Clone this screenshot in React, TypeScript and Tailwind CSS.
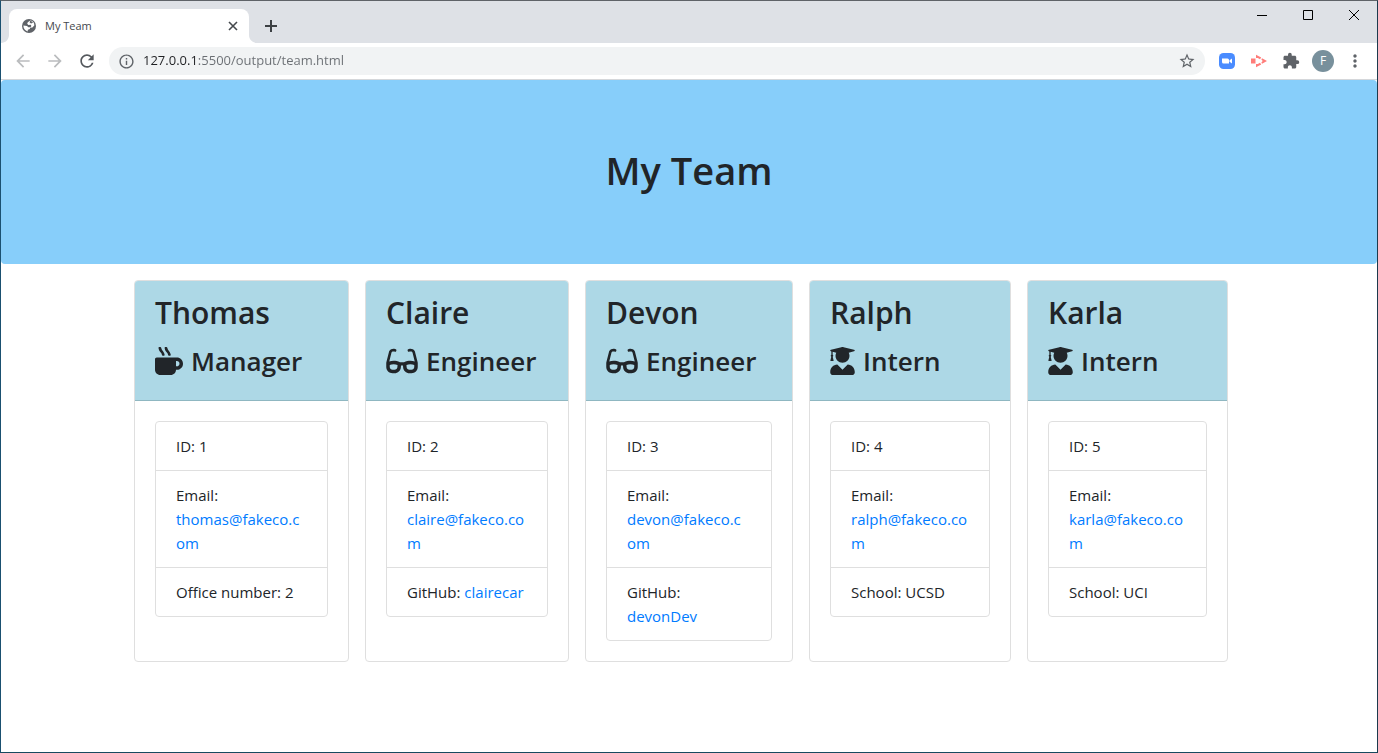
import type { ReactNode } from 'react';
import { FaGlasses, FaMugHot, FaUserGraduate } from 'react-icons/fa';
import {
  MdArrowBack,
  MdArrowForward,
  MdExtension,
  MdInfoOutline,
  MdMoreVert,
  MdRefresh,
  MdStarBorder,
} from 'react-icons/md';

type Role = 'Manager' | 'Engineer' | 'Intern';

interface Member {
  name: string;
  role: Role;
  id: number;
  // The address in two parts; a narrow card may wrap between them.
  email: [string, string];
  detail: { label: string; value: string; href?: string };
}

const team: Member[] = [
  { name: 'Thomas', role: 'Manager', id: 1, email: ['thomas@fakeco.c', 'om'], detail: { label: 'Office number', value: '2' } },
  { name: 'Claire', role: 'Engineer', id: 2, email: ['claire@fakeco.co', 'm'], detail: { label: 'GitHub', value: 'clairecar', href: 'https://github.com/clairecar' } },
  { name: 'Devon', role: 'Engineer', id: 3, email: ['devon@fakeco.c', 'om'], detail: { label: 'GitHub', value: 'devonDev', href: 'https://github.com/devonDev' } },
  { name: 'Ralph', role: 'Intern', id: 4, email: ['ralph@fakeco.co', 'm'], detail: { label: 'School', value: 'UCSD' } },
  { name: 'Karla', role: 'Intern', id: 5, email: ['karla@fakeco.co', 'm'], detail: { label: 'School', value: 'UCI' } },
];

const roleIcons: Record<Role, ReactNode> = {
  Manager: <FaMugHot className="h-7 w-7 shrink-0" />,
  Engineer: <FaGlasses className="h-7 w-8 shrink-0" />,
  Intern: <FaUserGraduate className="h-7 w-[25px] shrink-0" />,
};

function Globe() {
  return (
    <svg viewBox="0 0 16 16" className="size-4 shrink-0" aria-hidden="true">
      <circle cx="8" cy="8" r="7" fill="#5f6368" />
      <path
        d="M9.300 2.600 6.800 4.200l-.6 1.600 1.200 1.100 2.300-.1.700 1.200-1 1.200-2.100.1-1.300-1.300-3.600-.4c-.1 3 1.600 5.200 4.300 5.800l.1-1.700 2-.6.3-1.400 2.300-.3 1.900-1.800c.2-2.300-1-4-2.800-4.800z"
        fill="#fff"
      />
      <path d="M9.300 2.600l-.7 1.900 1.500.9 2-.9z" fill="#5f6368" />
    </svg>
  );
}

function TabFlare({ className }: { className: string }) {
  return (
    <svg viewBox="0 0 8 8" className={className} aria-hidden="true">
      <path d="M8 0v8H0c4.400 0 8-3.600 8-8z" fill="#fff" />
    </svg>
  );
}

function TabStrip() {
  return (
    <div className="flex h-[42px] items-end bg-[#dee1e6] pl-2">
      <div className="relative flex h-[34px] w-60 items-center gap-2 rounded-t-lg bg-white pr-2 pl-3">
        <TabFlare className="absolute bottom-0 -left-2 size-2" />
        <TabFlare className="absolute -right-2 bottom-0 size-2 -scale-x-100" />
        <Globe />
        <span className="flex-1 text-[11px] text-[#45494d]">My Team</span>
        <button type="button" aria-label="Close tab" className="flex size-4 items-center justify-center">
          <svg viewBox="0 0 16 16" className="size-4" aria-hidden="true">
            <path d="M4 4l8 8M12 4l-8 8" stroke="#45494d" strokeWidth="1.600" />
          </svg>
        </button>
      </div>
      <button type="button" aria-label="New tab" className="ml-2 flex h-[34px] w-7 items-center justify-center">
        <svg viewBox="0 0 16 16" className="size-4" aria-hidden="true">
          <path d="M8 2v12M2 8h12" stroke="#3c4043" strokeWidth="2" />
        </svg>
      </button>
      <div className="ml-auto flex self-start">
        <button type="button" aria-label="Minimize" className="flex h-7 w-[46px] items-center justify-center">
          <svg viewBox="0 0 12 12" className="size-3" aria-hidden="true">
            <path d="M1 6.500h10" stroke="#000" />
          </svg>
        </button>
        <button type="button" aria-label="Maximize" className="flex h-7 w-[46px] items-center justify-center">
          <svg viewBox="0 0 12 12" className="size-3" aria-hidden="true">
            <path d="M1.500 1.500h9v9h-9z" fill="none" stroke="#000" />
          </svg>
        </button>
        <button type="button" aria-label="Close window" className="flex h-7 w-[46px] items-center justify-center">
          <svg viewBox="0 0 12 12" className="size-3" aria-hidden="true">
            <path d="M1 1l10 10M11 1 1 11" stroke="#000" />
          </svg>
        </button>
      </div>
    </div>
  );
}

const toolButton = 'flex size-[22px] items-center justify-center text-[#5f6368]';

function Toolbar() {
  return (
    <div className="flex h-[37px] items-center border-b border-[#d5d7da] bg-white pr-[11px] pl-3">
      <div className="flex gap-3 pr-3">
        <button type="button" aria-label="Back" disabled className="text-[#babcbe]">
          <MdArrowBack className="size-5" />
        </button>
        <button type="button" aria-label="Forward" disabled className="text-[#babcbe]">
          <MdArrowForward className="size-5" />
        </button>
        <button type="button" aria-label="Reload" className="text-[#55595e]">
          <MdRefresh className="size-5" />
        </button>
      </div>
      <div className="flex h-7 flex-1 items-center gap-2 rounded-full bg-[#f1f3f4] px-[9px] text-[#5f6368]">
        <MdInfoOutline className="size-[17px] shrink-0" />
        <input
          type="text"
          aria-label="Address"
          defaultValue="127.0.0.1:5500/output/team.html"
          className="min-w-0 flex-1 bg-linear-to-r from-[#202124] from-[54px] to-[#6a6e73] to-[54px] bg-clip-text text-[13px] text-transparent outline-none"
        />
        <button type="button" aria-label="Bookmark this page">
          <MdStarBorder className="size-[18px]" />
        </button>
      </div>
      <div className="flex items-center gap-[10px] pl-[11px]">
        <button type="button" aria-label="Zoom" className={toolButton}>
          <svg viewBox="0 0 16 16" className="size-4" aria-hidden="true">
            <rect width="16" height="16" rx="4.500" fill="#4a8cff" />
            <path d="M3 5.500h5.500a1.500 1.500 0 0 1 1.500 1.500v3.500H4.500A1.500 1.500 0 0 1 3 9zM10.500 7.300 13 5.500v5l-2.500-1.800z" fill="#fff" />
          </svg>
        </button>
        <button type="button" aria-label="Screen recorder" className={toolButton}>
          <svg viewBox="0 0 16 16" className="size-4" fill="#ff7d7a" aria-hidden="true">
            <path d="M0 5.500h4.500v5H0z" />
            <path d="M5 1.800 10.200 4.600 9 6.200 6.800 5H5zM5 14.200 10.200 11.400 9 9.800 6.800 11H5zM11 5.200 16 8l-5 2.800-.6-1.400L11.700 8l-1.300-1.400z" />
          </svg>
        </button>
        <button type="button" aria-label="Extensions" className={toolButton}>
          <MdExtension className="size-[18px]" />
        </button>
        <button
          type="button"
          aria-label="Profile"
          className="flex size-[22px] items-center justify-center rounded-full bg-[#78909c] text-[12px] text-white"
        >
          F
        </button>
        <button type="button" aria-label="Menu" className={toolButton}>
          <MdMoreVert className="size-5" />
        </button>
      </div>
    </div>
  );
}

function MemberCard({ name, role, id, email, detail }: Member) {
  return (
    <article className="min-w-0 overflow-hidden rounded-[4px] border border-[#dfdfdf] bg-white">
      <header className="border-b border-[#8fb7c1] bg-[#add8e6] px-5 pt-3 pb-[19px] font-semibold">
        <h2 className="mb-2 text-[30px] leading-10">{name}</h2>
        <h3 className="flex items-center gap-2 text-[26px] leading-10">
          {roleIcons[role]}
          {role}
        </h3>
      </header>
      <div className="p-5">
        <ul className="divide-y divide-[#dfdfdf] rounded-[4px] border border-[#dfdfdf] text-[15px] leading-6">
          <li className="px-5 py-3">ID: {id}</li>
          <li className="px-5 py-3 wrap-break-word">
            Email:{' '}
            <a href={`mailto:${email.join('')}`} className="text-[#007bff]">
              {email[0]}
              <wbr />
              {email[1]}
            </a>
          </li>
          <li className="px-5 py-3 wrap-break-word">
            {detail.label}:{' '}
            {detail.href ? (
              <a href={detail.href} className="text-[#007bff]">
                {detail.value}
              </a>
            ) : (
              detail.value
            )}
          </li>
        </ul>
      </div>
    </article>
  );
}

export default function App() {
  return (
    <div className="flex min-h-screen flex-col border border-t-[#5f6368] border-r-[#1c3a4d] border-b-[#174a5f] border-l-[#1a5070] bg-white font-['Open_Sans','Noto_Sans',sans-serif] text-[#212529]">
      <TabStrip />
      <Toolbar />
      <main>
        <div className="rounded-[4px] bg-[#87cefa] px-8 py-16 text-center">
          <h1 className="mb-1 text-[38px] leading-[52px] font-semibold">My Team</h1>
        </div>
        <div className="mx-auto grid w-full max-w-[1140px] grid-cols-[215fr_204fr_208fr_202fr_201fr] gap-4 py-4 pr-[31px] pl-[15px]">
          {team.map((member) => (
            <MemberCard key={member.id} {...member} />
          ))}
        </div>
      </main>
    </div>
  );
}
